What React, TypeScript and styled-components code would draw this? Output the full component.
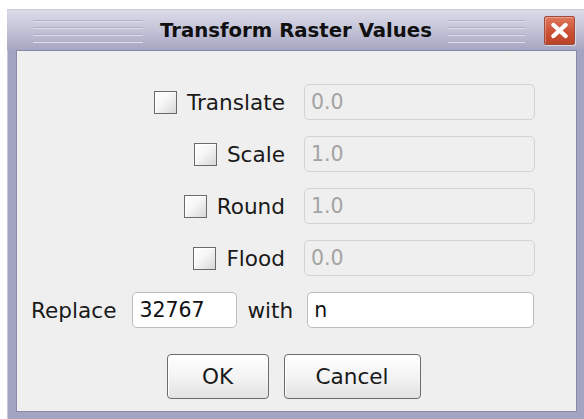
import React from "react";
import styled, { createGlobalStyle } from "styled-components";

const GlobalStyle = createGlobalStyle`
  html, body {
    margin: 0;
    padding: 0;
    background: #ffffff;
  }
  body {
    font-family: "DejaVu Sans", Verdana, sans-serif;
  }
`;

const Frame = styled.div`
  margin: 9px 0 0 7px;
  width: 577px;
  height: 410px;
  display: flex;
  flex-direction: column;
  background: #a3a3c2;
  box-shadow: inset 1px 1px 0 #c8c8dc;
`;

const TitleBar = styled.div`
  height: 41px;
  flex: none;
  display: flex;
  align-items: center;
  padding: 0 9px 0 26px;
  background: linear-gradient(#dadae8 0%, #c6c6da 45%, #a6a6c2 100%);
  border-top: 1px solid #cacade;
  box-sizing: border-box;
`;

const Grooves = styled.div<{ $width: number }>`
  width: ${({ $width }) => $width}px;
  height: 28px;
  flex: none;
  background: repeating-linear-gradient(
    to bottom,
    transparent 0px,
    transparent 4px,
    #b0b0c8 4px,
    #b0b0c8 5px,
    #dedeea 5px,
    #dedeea 6px,
    transparent 6px,
    transparent 7px
  );
`;

const Title = styled.div`
  margin: 0 16px 0 17px;
  font-weight: bold;
  font-size: 19.7px;
  color: #101010;
  white-space: nowrap;
`;

const CloseButton = styled.div`
  margin-left: auto;
  width: 31px;
  height: 29px;
  box-sizing: border-box;
  border: 1px solid #a04a3a;
  border-radius: 2px;
  background: linear-gradient(#e0785c, #cc5034 55%, #b94428);
  box-shadow: inset 1px 1px 0 rgba(255, 255, 255, 0.3), 1px 1px 0 #d8d8e6;
  display: flex;
  align-items: center;
  justify-content: center;
`;

const Body = styled.div`
  flex: 1;
  margin: 0 7px 7px 9px;
  background: #efefef;
  border: 1px solid #8a8aa8;
  box-sizing: border-box;
  display: flex;
  flex-direction: column;
  padding: 33px 41px 0 14px;
`;

const Form = styled.div`
  display: flex;
  flex-direction: column;
  gap: 16px;
`;

const Row = styled.div`
  display: flex;
  align-items: center;
  justify-content: flex-end;
  height: 36px;
`;

const CheckLabel = styled.label`
  display: flex;
  align-items: center;
  gap: 10px;
  margin-right: 19px;
`;

const Box = styled.span`
  width: 23px;
  height: 23px;
  box-sizing: border-box;
  border: 1px solid #6a6a6a;
  background: linear-gradient(135deg, #ffffff 0%, #f6f6f6 45%, #d6d6d6 100%);
  box-shadow: inset 1px 1px 0 #ffffff;
`;

const Text = styled.span<{ $gap?: number }>`
  font-size: 21.6px;
  color: #1a1a1a;
  white-space: nowrap;
  margin-left: ${({ $gap }) => $gap ?? 0}px;
`;

const Field = styled.div<{ $width: number; $disabled?: boolean; $gap?: number }>`
  width: ${({ $width }) => $width}px;
  margin-left: ${({ $gap }) => $gap ?? 0}px;
  height: 36px;
  box-sizing: border-box;
  border: 1px solid ${({ $disabled }) => ($disabled ? "#d2d2d2" : "#bdbdbd")};
  border-radius: 5px;
  background: ${({ $disabled }) => ($disabled ? "#efefef" : "#ffffff")};
  color: ${({ $disabled }) => ($disabled ? "#a4a4a4" : "#111111")};
  font-size: 20.5px;
  display: flex;
  align-items: center;
  padding-left: 6px;
  flex: none;
`;

const ReplaceRow = styled(Row)`
  justify-content: flex-start;
`;

const Buttons = styled.div`
  display: flex;
  justify-content: center;
  gap: 15px;
  margin-top: 26px;
  padding-left: 21px;
`;

const Button = styled.div<{ $width: number }>`
  width: ${({ $width }) => $width}px;
  height: 45px;
  box-sizing: border-box;
  border: 1px solid #6c6c6c;
  border-radius: 4px;
  background: linear-gradient(#ffffff, #f4f4f4 50%, #e2e2e2);
  box-shadow: inset 1px 1px 0 #ffffff;
  display: flex;
  align-items: center;
  justify-content: center;
  font-size: 21.6px;
  color: #1a1a1a;
`;

const options = [
  { label: "Translate", value: "0.0" },
  { label: "Scale", value: "1.0" },
  { label: "Round", value: "1.0" },
  { label: "Flood", value: "0.0" },
];

export default function App() {
  return (
    <>
      <GlobalStyle />
      <Frame>
        <TitleBar>
          <Grooves $width={110} />
          <Title>Transform Raster Values</Title>
          <Grooves $width={77} />
          <CloseButton>
            <svg width="19" height="17" viewBox="0 0 19 17">
              <path
                d="M3.5 3 L15.5 14 M15.5 3 L3.5 14"
                stroke="#ffffff"
                strokeWidth="4.4"
                strokeLinecap="round"
              />
            </svg>
          </CloseButton>
        </TitleBar>
        <Body>
          <Form>
            {options.map((o) => (
              <Row key={o.label}>
                <CheckLabel>
                  <Box />
                  <Text>{o.label}</Text>
                </CheckLabel>
                <Field $width={231} $disabled>
                  {o.value}
                </Field>
              </Row>
            ))}
            <ReplaceRow>
              <Text>Replace</Text>
              <Field $width={105} $gap={16}>
                32767
              </Field>
              <Text $gap={10}>with</Text>
              <Field $width={227} $gap={14}>
                n
              </Field>
            </ReplaceRow>
          </Form>
          <Buttons>
            <Button $width={102}>OK</Button>
            <Button $width={137}>Cancel</Button>
          </Buttons>
        </Body>
      </Frame>
    </>
  );
}
